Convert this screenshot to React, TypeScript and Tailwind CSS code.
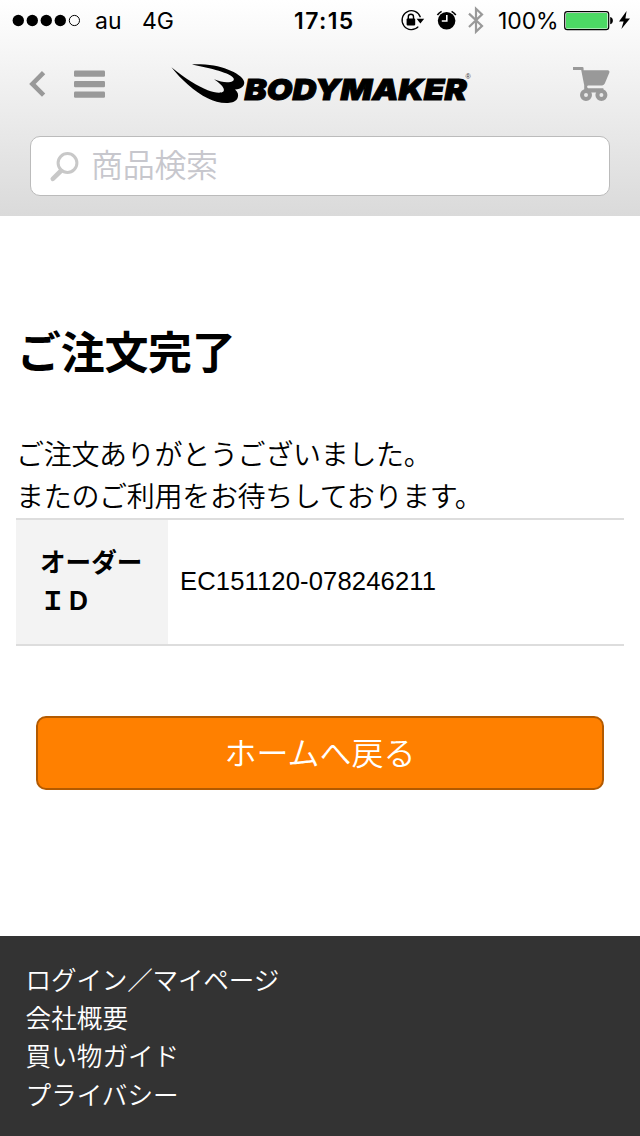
import React from "react";

const jp = "font-['Liberation_Sans','Noto_Sans_CJK_JP',sans-serif]";

function StatusBar() {
  return (
    <div className="flex h-10 items-center font-['Inter',sans-serif] text-[23px] leading-10 whitespace-nowrap text-black">
      <svg className="ml-3 h-10 w-[70px] shrink-0" viewBox="12 0 70 40">
        <circle cx="18.3" cy="20.5" r="5.7" />
        <circle cx="32.3" cy="20.5" r="5.7" />
        <circle cx="46.3" cy="20.5" r="5.7" />
        <circle cx="60.3" cy="20.5" r="5.7" />
        <circle cx="74.4" cy="20.5" r="5.1" fill="none" stroke="#000" />
      </svg>
      <span className="ml-[13px] w-[47px] pt-[2px]">au</span>
      <span className="w-[152px] pt-[2px]">4G</span>
      <span className="w-[106px] pt-[2px] font-semibold tracking-[1.4px]">17:15</span>
      <svg className="h-10 w-[98px] shrink-0" viewBox="400 0 98 40">
        <path d="M420.4 17.2A9.4 9.4 0 1 0 418.3 26.6" fill="none" stroke="#000" strokeWidth="1.3" />
        <path d="M416.6 18.8h7.6l-3.8 4.6z" />
        <rect x="406.6" y="18.6" width="8.6" height="6.8" rx="0.8" />
        <path d="M408.3 19v-2.2a2.6 2.6 0 0 1 5.2 0V19" fill="none" stroke="#000" strokeWidth="1.4" />
        <circle cx="446.6" cy="20.7" r="8.8" />
        <path d="M437.4 15a12 12 0 0 1 4.2-3.6M451.6 11.4a12 12 0 0 1 4.2 3.6" fill="none" stroke="#000" strokeWidth="1.6" />
        <path d="M446.8 15v6h-5" fill="none" stroke="#fff" strokeWidth="1.6" />
        <path d="M469 13.6l13 12.4-6 5.6V8.8l6 5.6L469 27" fill="none" stroke="#999" strokeWidth="2.2" />
      </svg>
      <span className="w-[66px] pt-[2px] tracking-[-0.1px]">100%</span>
      <svg className="h-10 w-[76px] shrink-0" viewBox="564 0 76 40">
        <rect x="564.7" y="11.7" width="44" height="18" rx="2.6" fill="#fff" stroke="#000" strokeWidth="1.2" />
        <rect x="566" y="13" width="41.4" height="15.4" rx="1" fill="#4cd964" />
        <path d="M610.2 17c3.6.6 3.6 6.6 0 7.2z" />
        <path d="M626.6 11l-7.6 10.4h4.6L621.4 29l8.6-10.6h-4.6z" />
      </svg>
    </div>
  );
}

function Logo() {
  return (
    <svg className="ml-[64px] h-[46px] w-[304px]" viewBox="169 60 304 46">
      <path d="M191 64.4C206 64 218 66 226.7 69.4C235 72.6 242.4 77 243.2 82C243.6 86 240.5 88.8 234 89.6C237 92 237.8 95 236.6 98C235 101.5 231 103 226.5 102.9C219 103.1 213 101.2 206.7 98.2C194 92 180 79.5 170.4 67.2C184 78.5 197 86.3 206.7 90.2C213 92.6 219.5 93.8 222.4 91.6C224.6 88.6 220 84 213 79.2C218 81.2 222 82.1 226 82.2C230.5 82.3 233.4 81 232.7 78.4C230.5 73 209 68 191 64.4Z" />
      <text
        x="243.6"
        y="99.8"
        textLength="222"
        lengthAdjust="spacingAndGlyphs"
        className="font-['Inter',sans-serif] text-[29px] font-black italic"
        stroke="#000"
        strokeWidth="1"
      >
        BODYMAKER
      </text>
      <text x="464.4" y="78.8" className="font-['Liberation_Sans',sans-serif] text-[7px]" fill="#333">®</text>
    </svg>
  );
}

function Header() {
  return (
    <header className="h-[216px] bg-linear-to-b from-white to-[#dadada]">
      <StatusBar />
      <div className="flex h-24 items-start pt-5">
        <svg className="ml-[29px] h-[46px] w-[18px]" viewBox="29 60 18 46">
          <path d="M43.6 72.6L32.4 84l11.2 11.2" fill="none" stroke="#999" strokeWidth="4.6" />
        </svg>
        <svg className="ml-[26px] h-[46px] w-[33px]" viewBox="73 60 33 46" fill="#999">
          <rect x="74" y="70.6" width="31" height="6.2" rx="1.2" />
          <rect x="74" y="81" width="31" height="6.2" rx="1.2" />
          <rect x="74" y="91.6" width="31" height="6.2" rx="1.2" />
        </svg>
        <Logo />
        <svg className="ml-[98px] h-[46px] w-[40px]" viewBox="572 60 40 46" fill="#999">
          <path d="M573 67h9.4q1.2 0 1.2 1.4v1.8h24.4q2 .2 1.4 2.2l-4.6 11.2q-.8 1.8-2.6 1.8h-14.2q-1.8.9 0 2.8h15.4v4.4h-19.2v-7.4l-3-15.2H573z" />
          <g fill="#e9e9e9" stroke="#999" strokeWidth="4">
            <circle cx="586" cy="95.1" r="4" />
            <circle cx="601.4" cy="95.1" r="4" />
          </g>
        </svg>
      </div>
      <div className="mx-[30px] flex h-[60px] items-center rounded-[10px] border border-[#bbb] bg-white">
        <svg className="ml-[18px] h-[58px] w-[30px]" viewBox="49 137 30 58">
          <circle cx="67.5" cy="163" r="9.4" fill="none" stroke="#c8c8c8" strokeWidth="3" />
          <path d="M60.8 171l-8 7.8" stroke="#c8c8c8" strokeWidth="4.6" strokeLinecap="round" />
        </svg>
        <span className={`${jp} ml-[12px] pb-px text-[32px] leading-[54px] font-[350] tracking-[-0.3px] text-[#c7c7cd]`}>商品検索</span>
      </div>
    </header>
  );
}

export default function App() {
  return (
    <div className={`${jp} flex h-[1136px] w-[640px] flex-col overflow-hidden bg-white text-black`}>
      <Header />
      <main className="flex h-[720px] flex-col px-4">
        <h1 className="mt-[105px] ml-px text-[44px] leading-[66px] font-bold tracking-[-0.3px]">ご注文完了</h1>
        <p className="mt-[48px] text-[28px] leading-[42px] font-[350] tracking-[-0.3px]">
          ご注文ありがとうございました。
          <br />
          またのご利用をお待ちしております。
        </p>
        <div className="-mt-px flex h-32 border-y-2 border-[#ddd]">
          <div className="w-[152px] bg-[#f3f3f3] pt-[24px] pl-6 text-[25.6px] leading-[38.4px] font-bold">
            オーダー
            <br />
            ＩＤ
          </div>
          <div className="flex items-center pb-[2px] pl-3 text-[25.6px] tracking-[0.13px]">EC151120-078246211</div>
        </div>
        <button className="mx-5 mt-[70px] h-[74px] rounded-[10px] border-2 border-[#b35a00] bg-[#ff8000] pt-[2px] text-[32px] leading-[68px] font-[350] text-white">
          ホームへ戻る
        </button>
      </main>
      <footer className="h-[200px] bg-[#333] pt-[26px] pl-[25.6px] text-[25.6px] leading-[38.2px] font-[350] text-white">
        <div className="tracking-[-0.2px]">ログイン／マイページ</div>
        <div>会社概要</div>
        <div>買い物ガイド</div>
        <div>プライバシー</div>
      </footer>
    </div>
  );
}
